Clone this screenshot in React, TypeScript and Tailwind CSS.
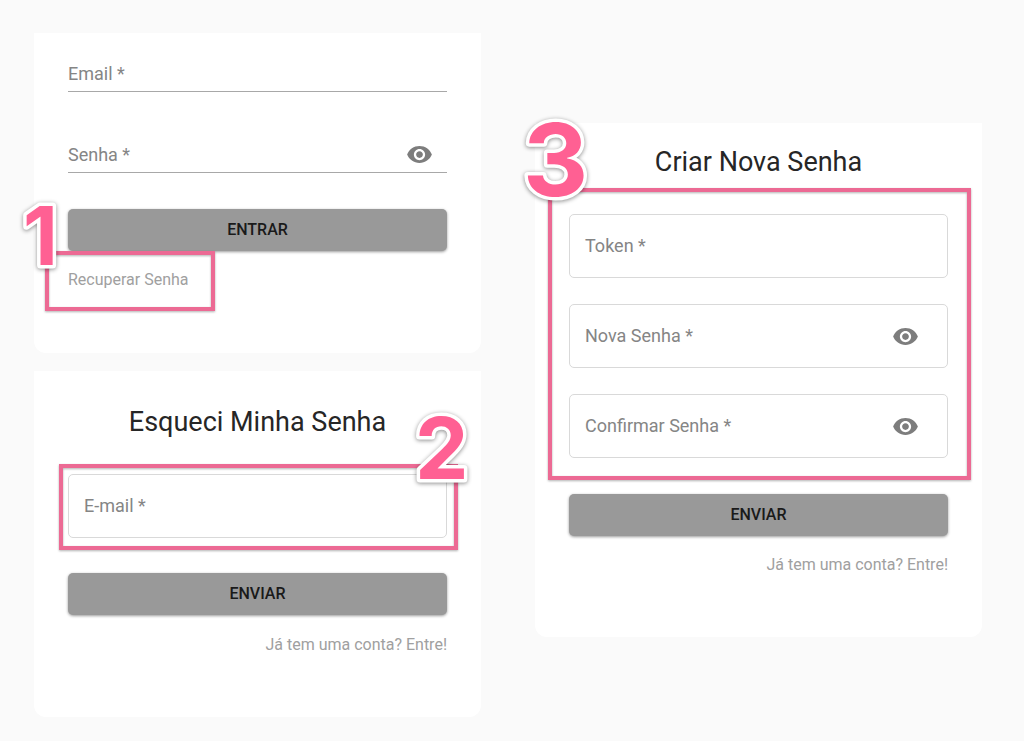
import { useState } from 'react';
import type { ReactNode } from 'react';
import { MdVisibility } from 'react-icons/md';

interface FieldProps {
  id: string;
  label: string;
  type?: 'text' | 'email' | 'password';
  variant?: 'outlined' | 'standard';
}

const Field = ({ id, label, type = 'text', variant = 'outlined' }: FieldProps) => {
  const [visible, setVisible] = useState(false);
  const outlined = variant === 'outlined';
  const isPassword = type === 'password';

  return (
    <div
      className={`relative flex items-center ${
        outlined ? 'h-16 rounded-[5px] border border-[#d9d9d9] pl-[15px] pr-7' : 'h-[37px] border-b border-[#a8a8a8] pr-3.5'
      }`}
    >
      <input
        id={id}
        type={isPassword && visible ? 'text' : type}
        placeholder=" "
        required
        className="peer h-full min-w-0 flex-1 bg-transparent text-lg text-[#212121] outline-none"
      />
      <label
        htmlFor={id}
        className={`pointer-events-none absolute inset-y-0 flex items-center text-lg text-[#858585] peer-focus:invisible peer-[:not(:placeholder-shown)]:invisible ${
          outlined ? 'left-[15px]' : 'left-0 pt-0.5'
        }`}
      >
        {label} *
      </label>
      {isPassword && (
        <button type="button" aria-label="Mostrar senha" onClick={() => setVisible(!visible)} className="text-[#7d7d7d]">
          <MdVisibility size={27} />
        </button>
      )}
    </div>
  );
};

const SubmitButton = ({ children }: { children: ReactNode }) => (
  <button
    type="submit"
    className="h-[42px] w-full rounded-[5px] bg-[#999999] text-base font-medium text-[#1a1a1a] shadow-[0_1px_3px_rgba(0,0,0,0.4)]"
  >
    {children}
  </button>
);

const TextLink = ({ children }: { children: ReactNode }) => (
  <a href="#" className="text-base text-[#a0a0a0]">
    {children}
  </a>
);

// Pink frame with a big step number on one of its corners
const Step = ({ number, frame, badge }: { number: number; frame: string; badge: string }) => (
  <div className={`pointer-events-none absolute z-10 ${frame}`}>
    <div className="absolute inset-0 border-4 border-[#ec6a94] drop-shadow-[0_1px_1px_rgba(0,0,0,0.3)]" />
    <svg
      className={`absolute h-[1em] w-[1em] overflow-visible font-['Inter',sans-serif] font-bold drop-shadow-[0_1px_2px_rgba(0,0,0,0.45)] ${badge}`}
    >
      <text x="0" y="0.86em" fill="#ff6093" stroke="#ffffff" strokeWidth="7" strokeLinejoin="round" paintOrder="stroke">
        {number}
      </text>
    </svg>
  </div>
);

const Card = ({ className, children }: { className: string; children: ReactNode }) => (
  <form className={`rounded-b-xl bg-white px-[34px] ${className}`} onSubmit={(e) => e.preventDefault()}>
    {children}
  </form>
);

const Title = ({ children }: { children: ReactNode }) => (
  <h2 className="mb-[34px] text-center text-[27px] leading-9 text-[#262626]">{children}</h2>
);

const LoginCard = () => (
  <Card className="pb-[61px] pt-[22px]">
    <div className="mb-9 flex flex-col gap-11">
      <Field id="login-email" label="Email" type="email" variant="standard" />
      <Field id="login-password" label="Senha" type="password" variant="standard" />
    </div>
    <SubmitButton>ENTRAR</SubmitButton>
    <div className="relative mt-[17px] w-fit">
      <TextLink>Recuperar Senha</TextLink>
      <Step number={1} frame="-left-[23px] -right-[26px] -top-[17px] -bottom-[19px]" badge="-left-[22px] -top-[56px] text-[81px]" />
    </div>
  </Card>
);

const ForgotCard = () => (
  <Card className="pb-[60px] pt-[33px]">
    <Title>Esqueci Minha Senha</Title>
    <div className="relative mb-[35px]">
      <Field id="forgot-email" label="E-mail" type="email" />
      <Step number={2} frame="-left-[9px] -right-[11px] -top-[10px] -bottom-3" badge="left-[356px] -top-[58px] text-[85px]" />
    </div>
    <SubmitButton>ENVIAR</SubmitButton>
    <div className="mt-[18px] text-right">
      <TextLink>Já tem uma conta? Entre!</TextLink>
    </div>
  </Card>
);

const ResetCard = () => (
  <Card className="pb-[60px] pt-[21px]">
    <Title>Criar Nova Senha</Title>
    <div className="relative mb-9 flex flex-col gap-[26px]">
      <Field id="reset-token" label="Token" />
      <Field id="reset-password" label="Nova Senha" type="password" />
      <Field id="reset-confirm" label="Confirmar Senha" type="password" />
      <Step number={3} frame="-left-[21px] -right-[23px] -top-[26px] -bottom-[22px]" badge="-left-[25px] -top-[79px] text-[101px]" />
    </div>
    <SubmitButton>ENVIAR</SubmitButton>
    <div className="mt-[17px] text-right">
      <TextLink>Já tem uma conta? Entre!</TextLink>
    </div>
  </Card>
);

const App = () => {
  return (
    <main className="grid min-h-screen grid-cols-2 items-start gap-[54px] bg-[#fafafa] pb-6 pl-[34px] pr-[42px] pt-[33px] font-['Roboto',sans-serif]">
      <div className="flex flex-col gap-[18px]">
        <LoginCard />
        <ForgotCard />
      </div>
      <div className="pt-[90px]">
        <ResetCard />
      </div>
    </main>
  );
};

export default App;
